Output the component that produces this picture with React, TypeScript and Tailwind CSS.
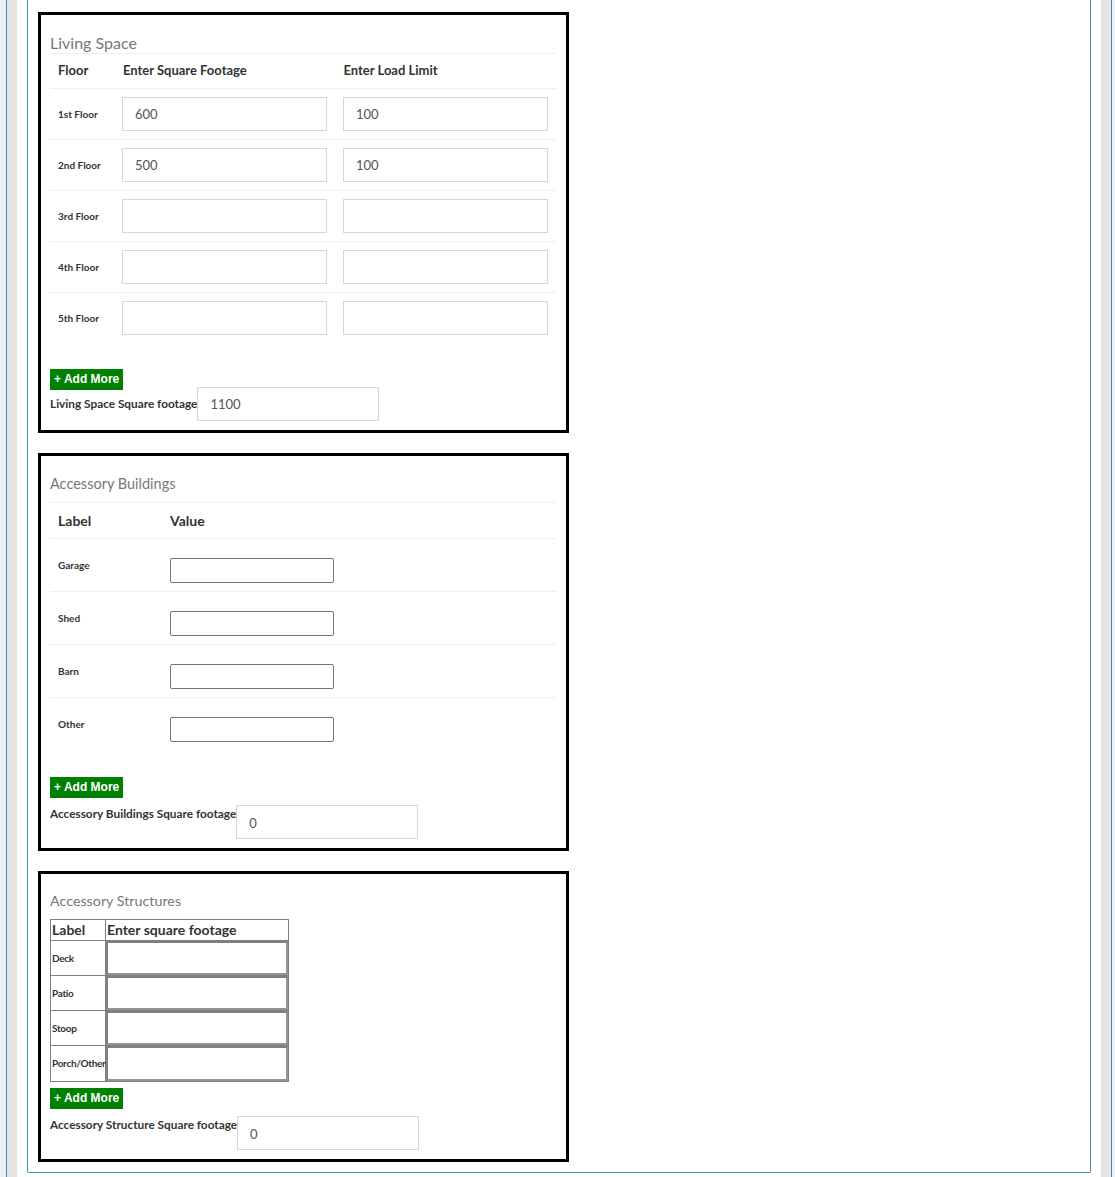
import React from "react";

const floors = [
  { label: "1st Floor", sq: "600", load: "100" },
  { label: "2nd Floor", sq: "500", load: "100" },
  { label: "3rd Floor", sq: "", load: "" },
  { label: "4th Floor", sq: "", load: "" },
  { label: "5th Floor", sq: "", load: "" },
];

const buildings = ["Garage", "Shed", "Barn", "Other"];
const structures = ["Deck", "Patio", "Stoop", "Porch/Other"];

function AddMore() {
  return (
    <button
      type="button"
      className="block h-[21px] bg-[#008000] px-[4px] text-[12px] font-bold leading-[21px] text-white font-['Liberation_Sans',Arial,sans-serif]"
    >
      + Add More
    </button>
  );
}

function TotalRow({ label, value, top }: { label: string; value: string; top?: boolean }) {
  return (
    <div className={`flex ${top ? "mt-[7px] items-start" : "-mt-[3px] items-center"}`}>
      <span className={`text-[11.8px] font-bold text-[#333] ${top ? "pt-[1px] leading-[16px]" : ""}`}>{label}</span>
      <input
        defaultValue={value}
        className={`h-[34px] w-[182px] border border-[#d2d6de] px-[12px] text-[13px] text-[#555] outline-none ${top ? "pt-[2px]" : ""}`}
      />
    </div>
  );
}

export default function App() {
  return (
    <div className="min-h-[1177px] bg-[#ecf0f5] pl-[6px] pr-[3px] font-['Lato','Noto_Sans',sans-serif] text-[#333]">
      <div className="min-h-[1177px] border-x border-[#3c8dbc] bg-[#e4e4e4] px-[10px]">
        <div className="min-h-[1177px] bg-white px-[10px]">
          <div className="rounded-b-[2px] border-x border-b border-[#3c8dbc] pb-[10px] pl-[10px] pt-[12px]">
            {/* Living Space */}
            <div className="w-[531px] border-[3px] border-black pb-[9px] pl-[9px] pr-[10px] pt-[18px]">
              <div className="h-[21px] border-b border-[#eee] text-[16px] leading-[20px] text-[#777]">
                Living Space
              </div>
              <div className="flex h-[35px] items-center border-b border-[#eee] text-[13px] font-bold">
                <div className="w-[65px] pl-[8px]">Floor</div>
                <div className="w-[221px] pl-[8px]">Enter Square Footage</div>
                <div className="w-[221px] pl-[8px]">Enter Load Limit</div>
              </div>
              {floors.map((f, i) => (
                <div
                  key={f.label}
                  className={`flex h-[51px] items-center ${i < floors.length - 1 ? "border-b border-[#eee]" : "pb-[1px]"}`}
                >
                  <div className="w-[65px] pl-[8px] text-[10px] font-bold">{f.label}</div>
                  <div className="w-[221px] px-[8px]">
                    <input
                      defaultValue={f.sq}
                      className="h-[34px] w-[205px] border border-[#d2d6de] px-[12px] text-[13px] text-[#555] outline-none"
                    />
                  </div>
                  <div className="w-[221px] px-[8px]">
                    <input
                      defaultValue={f.load}
                      className="h-[34px] w-[205px] border border-[#d2d6de] px-[12px] text-[13px] text-[#555] outline-none"
                    />
                  </div>
                </div>
              ))}
              <div className="mt-[25px]">
                <AddMore />
              </div>
              <TotalRow label="Living Space Square footage" value="1100" />
            </div>

            {/* Accessory Buildings */}
            <div className="mt-[20px] w-[531px] border-[3px] border-black pb-[9px] pl-[9px] pr-[10px] pt-[18px]">
              <div className="h-[29px] border-b border-[#eee] text-[14.5px] leading-[20px] text-[#777]">
                Accessory Buildings
              </div>
              <div className="flex h-[36px] items-center border-b border-[#eee] text-[14px] font-bold">
                <div className="w-[112px] pl-[8px]">Label</div>
                <div className="pl-[8px]">Value</div>
              </div>
              {buildings.map((b, i) => (
                <div
                  key={b}
                  className={`flex h-[53px] items-start pt-[18px] ${i < buildings.length - 1 ? "border-b border-[#eee]" : ""}`}
                >
                  <div className="w-[112px] pl-[8px] pt-[1px] text-[10px] font-bold leading-[14px]">{b}</div>
                  <div className="pl-[8px]">
                    <input className="h-[25px] w-[164px] rounded-[2px] border border-[#767676] px-[2px] text-[13px] outline-none" />
                  </div>
                </div>
              ))}
              <div className="mt-[26px]">
                <AddMore />
              </div>
              <TotalRow label="Accessory Buildings Square footage" value="0" top />
            </div>

            {/* Accessory Structures */}
            <div className="mt-[20px] w-[531px] border-[3px] border-black pb-[9px] pl-[9px] pr-[10px] pt-[17px]">
              <div className="h-[28px] text-[14.3px] leading-[20px] text-[#777]">Accessory Structures</div>
              <div className="w-[239px] border border-[#808080]">
                <div className="flex h-[21px] border-b border-[#808080] text-[14px] font-bold leading-[20px]">
                  <div className="w-[55px] border-r border-[#808080] pl-[1px]">Label</div>
                  <div className="flex-1 pl-[1px]">Enter square footage</div>
                </div>
                {structures.map((s, i) => (
                  <div
                    key={s}
                    className={`flex h-[35px] ${i < structures.length - 1 ? "border-b border-[#808080]" : ""}`}
                  >
                    <div className="flex w-[55px] items-center whitespace-nowrap border-r border-[#808080] pl-[1px] text-[10px] font-bold tracking-[-0.3px]">
                      {s}
                    </div>
                    <div className="flex-1">
                      <input className="h-full w-full border-2 border-[#949494] border-l-[#808080] border-t-[#808080] outline-none" />
                    </div>
                  </div>
                ))}
              </div>
              <div className="mt-[6px]">
                <AddMore />
              </div>
              <TotalRow label="Accessory Structure Square footage" value="0" top />
            </div>
          </div>
        </div>
      </div>
    </div>
  );
}
